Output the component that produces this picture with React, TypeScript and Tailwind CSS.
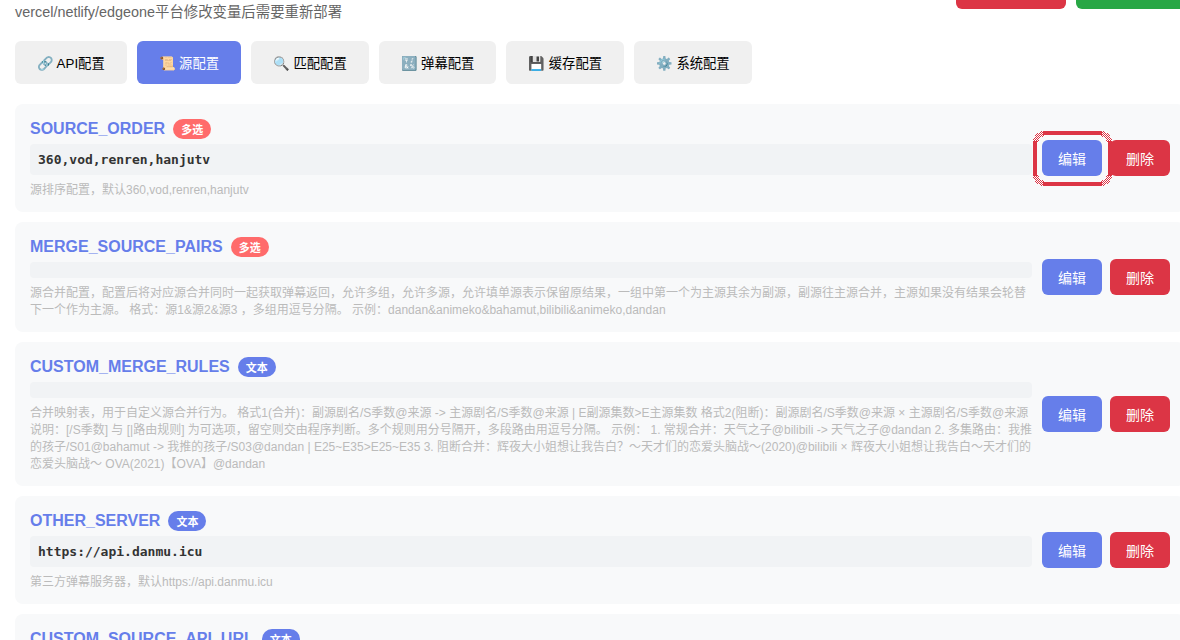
import clsx from "clsx";

type EnvKind = "multi" | "text";

interface EnvItem {
  name: string;
  kind: EnvKind;
  value: string;
  desc: string;
  highlighted?: boolean;
}

const tabs = [
  { icon: "🔗", label: "API配置" },
  { icon: "📜", label: "源配置" },
  { icon: "🔍", label: "匹配配置" },
  { icon: "🔣", label: "弹幕配置" },
  { icon: "💾", label: "缓存配置" },
  { icon: "⚙️", label: "系统配置" },
];

const items: EnvItem[] = [
  {
    name: "SOURCE_ORDER",
    kind: "multi",
    value: "360,vod,renren,hanjutv",
    desc: "源排序配置，默认360,vod,renren,hanjutv",
    highlighted: true,
  },
  {
    name: "MERGE_SOURCE_PAIRS",
    kind: "multi",
    value: "",
    desc: "源合并配置，配置后将对应源合并同时一起获取弹幕返回，允许多组，允许多源，允许填单源表示保留原结果，一组中第一个为主源其余为副源，副源往主源合并，主源如果没有结果会轮替下一个作为主源。 格式：源1&源2&源3 ，多组用逗号分隔。 示例：dandan&animeko&bahamut,bilibili&animeko,dandan",
  },
  {
    name: "CUSTOM_MERGE_RULES",
    kind: "text",
    value: "",
    desc: "合并映射表，用于自定义源合并行为。 格式1(合并)：副源剧名/S季数@来源 -> 主源剧名/S季数@来源 | E副源集数>E主源集数 格式2(阻断)：副源剧名/S季数@来源 × 主源剧名/S季数@来源 说明：[/S季数] 与 [|路由规则] 为可选项，留空则交由程序判断。多个规则用分号隔开，多段路由用逗号分隔。 示例： 1. 常规合并：天气之子@bilibili -> 天气之子@dandan 2. 多集路由：我推的孩子/S01@bahamut -> 我推的孩子/S03@dandan | E25~E35>E25~E35 3. 阻断合并：辉夜大小姐想让我告白？～天才们的恋爱头脑战～(2020)@bilibili × 辉夜大小姐想让我告白～天才们的恋爱头脑战～ OVA(2021)【OVA】@dandan",
  },
  {
    name: "OTHER_SERVER",
    kind: "text",
    value: "https://api.danmu.icu",
    desc: "第三方弹幕服务器，默认https://api.danmu.icu",
  },
  {
    name: "CUSTOM_SOURCE_API_URL",
    kind: "text",
    value: "",
    desc: "自定义弹幕源API地址，默认为空",
  },
];

const Badge = ({ kind }: { kind: EnvKind }) => (
  <span
    className={clsx(
      "ml-2 flex h-5 items-center rounded-[10px] px-2 pt-[3px] text-[11px] font-bold text-white",
      kind === "multi" ? "bg-[#ff6b6b]" : "bg-[#667eea]"
    )}
  >
    {kind === "multi" ? "多选" : "文本"}
  </span>
);

// Rounded frame with dithered corners
const Marker = () => (
  <svg
    className="pointer-events-none absolute -left-[9px] -top-[9px] z-10 max-w-none"
    width="79"
    height="55"
    viewBox="0 0 79 55"
    fill="none"
    shapeRendering="crispEdges"
  >
    <defs>
      <pattern id="dither" width="2" height="2" patternUnits="userSpaceOnUse">
        <rect width="2" height="2" fill="#fff" />
        <rect width="1" height="1" fill="#dc3545" />
        <rect x="1" y="1" width="1" height="1" fill="#dc3545" />
      </pattern>
    </defs>
    <path
      d="M2.5 12A9.5 9.5 0 0 1 12 2.5M67 2.5A9.5 9.5 0 0 1 76.5 12M76.5 43A9.5 9.5 0 0 1 67 52.5M12 52.5A9.5 9.5 0 0 1 2.5 43"
      stroke="url(#dither)"
      strokeWidth="5.5"
    />
    <path
      d="M10 2H69M77 10V45M69 53H10M2 45V10"
      stroke="#dc3545"
      strokeWidth="4"
    />
  </svg>
);

const EnvCard = ({ item }: { item: EnvItem }) => (
  <div className="flex items-center gap-2.5 rounded-lg bg-[#f8f9fa] p-[15px]">
    <div className="min-w-0 flex-1">
      <div className="mb-[5px] flex h-5 items-center">
        <span className="text-base font-bold leading-5 text-[#667eea]">
          {item.name}
        </span>
        <Badge kind={item.kind} />
      </div>
      <div className="mb-[7px] rounded bg-[#f1f3f5] p-2 font-['DejaVu_Sans_Mono',monospace] text-[13px] font-bold leading-[15px] text-[#333]">
        {item.value}
      </div>
      <div className="-mb-0.5 text-xs leading-[17px] text-[#bbb]">
        {item.desc}
      </div>
    </div>
    <div className="flex shrink-0 gap-2">
      <div className="relative">
        <button className="h-9 w-[60px] rounded-md bg-[#667eea] pt-0.5 text-sm text-white">
          编辑
        </button>
        {item.highlighted && <Marker />}
      </div>
      <button className="h-9 w-[60px] rounded-md bg-[#dc3545] pt-0.5 text-sm text-white">
        删除
      </button>
    </div>
  </div>
);

const App = () => {
  return (
    <div className="h-[640px] w-[1180px] overflow-hidden bg-white font-['Liberation_Sans','Noto_Sans_CJK_SC',sans-serif]">
      <div className="flex w-[1185px] flex-col pl-[15px]">
        <div className="flex h-[41px] items-start justify-between">
          <p className="text-[14.4px] leading-6 text-[#666]">
            vercel/netlify/edgeone平台修改变量后需要重新部署
          </p>
          <div className="flex gap-2.5">
            <div className="h-[9px] w-[110px] rounded-b-md bg-[#dc3545]" />
            <div className="h-[9px] w-[109px] rounded-b-md bg-[#28a745]" />
          </div>
        </div>

        <div className="mb-5 flex gap-2.5">
          {tabs.map((tab, i) => (
            <button
              key={tab.label}
              className={clsx(
                "h-[43px] whitespace-nowrap rounded-md px-[22px] pt-[3px] text-[13.333px] [word-spacing:-0.37px]",
                i === 1 ? "bg-[#667eea] text-white" : "bg-[#f0f0f0] text-black"
              )}
            >
              {tab.icon} {tab.label}
            </button>
          ))}
        </div>

        <div className="flex flex-col gap-2.5">
          {items.map((item) => (
            <EnvCard key={item.name} item={item} />
          ))}
        </div>
      </div>
    </div>
  );
};

export default App;
